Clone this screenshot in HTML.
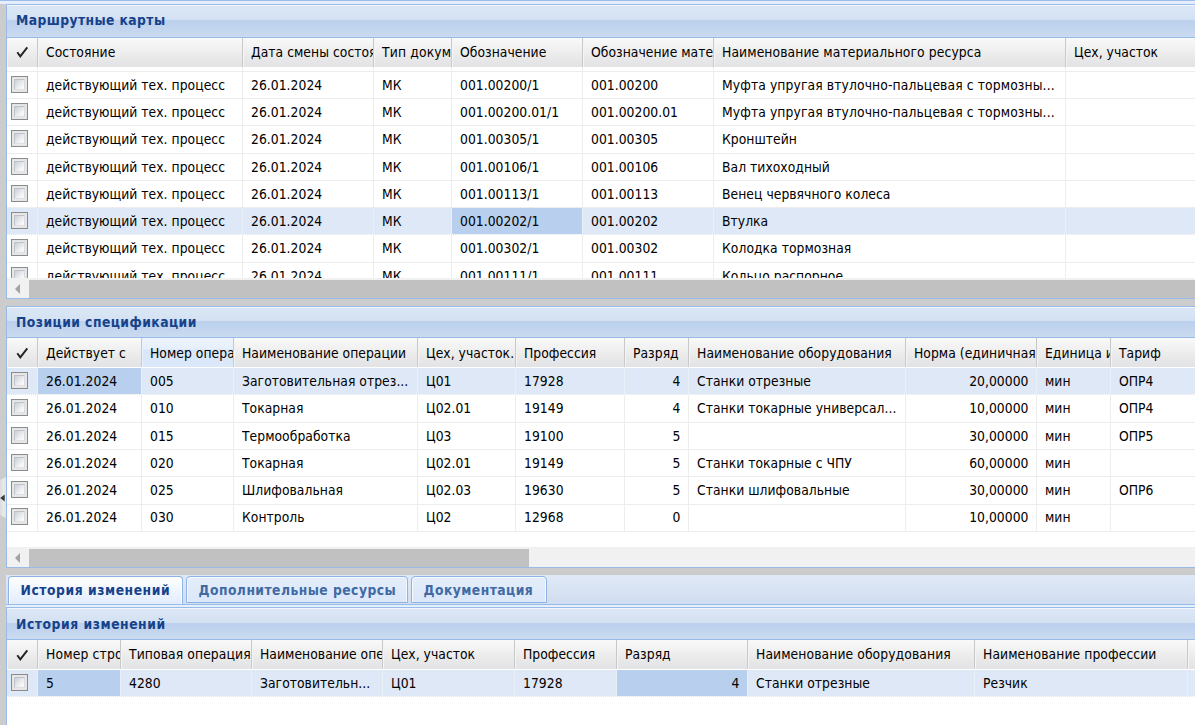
<!DOCTYPE html><html lang="ru"><head><meta charset="utf-8"><title>Маршрутные карты</title><style>
html,body{margin:0;padding:0}
body{width:1195px;height:725px;overflow:hidden;position:relative;background:#ccc;font:13.75px/17px "DejaVu Sans Condensed","Liberation Sans",sans-serif;color:#000;letter-spacing:0.04px}
div,span,i{box-sizing:border-box}
.abs{position:absolute}
.topstrip{left:0;top:0;width:1195px;height:4px;background:#e4eefd;border-top:1px solid #9cbde9}
.panel{position:absolute;left:6px;width:1200px;border:1px solid #99bbe8;background:#fff;overflow:hidden}
.phd{position:absolute;left:0;top:0;width:100%;height:33px;border-bottom:1px solid #99bbe8;
 background:linear-gradient(#f3f7fc 0,#f3f7fc 1px,#dbe7f6 1px,#d4e1f2 15px,#bbd0ed 15px,#cadaf0 100%);}
.phd span{position:absolute;left:9px;top:7px;font-weight:bold;color:#15428b;white-space:nowrap;line-height:17px}
.ghd{position:absolute;left:0;width:100%;height:29px;background:linear-gradient(#f9f9f9 0,#f1f1f1 35%,#e8e8e9 72%,#e2e3e5 100%);border-bottom:0}
.hc{position:absolute;top:0;height:29px;border-left:1px solid #f4f4f4;border-right:1px solid #c9c9c9;overflow:hidden;white-space:nowrap;line-height:17px;padding:6px 0 0 7px}
.hc.over{background:linear-gradient(#edf4fd 0,#e5eefb 11px,#d8e6f9 12px,#dbe8fa 100%);border-left-color:#e9f1fc;border-right-color:#c3c9d2}
.hc.r{text-align:left}
.row{position:absolute;left:0;width:100%;border-bottom:1px solid #ededed;background:#fff}
.row.sel{background:#dfe8f6;border-bottom:1px dotted #fbfcfe}
.c{position:absolute;top:0;height:100%;overflow:hidden;white-space:nowrap;padding-left:8px;border-right:1px solid #ededed}
.row.sel .c{border-right-color:#e9eef7}
.c.num{text-align:right;padding-right:8px;padding-left:0}
.c.cs{background:#b8cfee}
.c span{position:absolute;left:8px;right:8px;overflow:hidden;text-overflow:ellipsis}
.c.num span{left:0;right:7.5px}
.cb{position:absolute;left:4px;width:17px;height:17px;border:1px solid #8a8d8d;background:#e9e9ea;padding:2px;box-shadow:inset 0 0 0 1px #e4e4e5}
.cb i{display:block;width:11px;height:11px;border:1px solid;border-color:#bcc0c8 #d9dbdf #dfe0e3 #bfc3ca;background:linear-gradient(135deg,#cbd0d8 0,#e4e6ea 45%,#f6f6f7 75%,#f8f8f8 100%)}
.sb{position:absolute;left:0;width:100%;height:20px;background:#f1f1f1}
.sb .thumb{position:absolute;top:2px;height:18px;background:#c1c1c1;left:22px}
.sb .arr{position:absolute;left:8px;top:6px;width:0;height:0;border-top:5px solid transparent;border-bottom:5px solid transparent;border-right:5.5px solid #a3a3a3}
.chk{position:absolute;left:-1px;top:0}
</style></head><body>
<div class="abs topstrip"></div>
<div class="abs" style="left:0;top:477px;width:6px;height:41px;background:linear-gradient(90deg,#dcdcdc,#e9e9e9 60%,#e4e4e4);clip-path:polygon(0 3px,100% 0,100% 100%,0 38px)"></div>
<svg class="abs" style="left:0;top:493px" width="6" height="10" viewBox="0 0 6 10"><path d="M0.2 5 L4.7 1.6 L4.7 8.4 Z" fill="#383838"/></svg>
<div class="panel" style="top:4px;height:295px">
<div class="phd"><span style="letter-spacing:0.4px">Маршрутные карты</span></div>
<div class="ghd" style="top:33px">
<div class="hc" style="left:0;width:31px;padding:0"><svg class="chk" style="top:0px" width="30" height="28" viewBox="0 0 30 28"><path d="M10.3 14.3 L13.3 18.4 L20.3 9.3" fill="none" stroke="#222" stroke-width="1.9"/></svg></div>
<div class="hc" style="left:31px;width:205px;padding-top:6px">Состояние</div>
<div class="hc" style="left:236px;width:131px;padding-top:6px">Дата смены состояния</div>
<div class="hc" style="left:367px;width:78px;padding-top:6px;letter-spacing:0.15px">Тип документа</div>
<div class="hc" style="left:445px;width:131px;padding-top:6px">Обозначение</div>
<div class="hc" style="left:576px;width:131px;padding-top:6px">Обозначение материального ресурса</div>
<div class="hc" style="left:707px;width:352px;padding-top:6px;letter-spacing:0.1px">Наименование материального ресурса</div>
<div class="hc" style="left:1059px;width:234px;padding-top:6px">Цех, участок</div>
</div>
<div class="abs" style="left:0;top:62px;width:100%;height:211px;overflow:hidden">
<div class="row" style="top:-22px;height:27px">
<div class="c" style="left:0;width:31px;padding:0"><div class="cb" style="top:4px"><i></i></div></div>
<div class="c" style="left:31px;width:205px"><span style="top:5px"></span></div>
<div class="c" style="left:236px;width:131px"><span style="top:5px"></span></div>
<div class="c" style="left:367px;width:78px"><span style="top:5px"></span></div>
<div class="c" style="left:445px;width:131px"><span style="top:5px"></span></div>
<div class="c" style="left:576px;width:131px"><span style="top:5px"></span></div>
<div class="c" style="left:707px;width:352px"><span style="top:5px"></span></div>
<div class="c" style="left:1059px;width:234px"><span style="top:5px"></span></div>
</div>
<div class="row" style="top:5px;height:27px">
<div class="c" style="left:0;width:31px;padding:0"><div class="cb" style="top:4px"><i></i></div></div>
<div class="c" style="left:31px;width:205px"><span style="top:5px">действующий тех. процесс</span></div>
<div class="c" style="left:236px;width:131px"><span style="top:5px">26.01.2024</span></div>
<div class="c" style="left:367px;width:78px"><span style="top:5px">МК</span></div>
<div class="c" style="left:445px;width:131px"><span style="top:5px">001.00200/1</span></div>
<div class="c" style="left:576px;width:131px"><span style="top:5px">001.00200</span></div>
<div class="c" style="left:707px;width:352px"><span style="top:5px;letter-spacing:0.11px">Муфта упругая втулочно-пальцевая с тормозны...</span></div>
<div class="c" style="left:1059px;width:234px"><span style="top:5px"></span></div>
</div>
<div class="row" style="top:32px;height:27px">
<div class="c" style="left:0;width:31px;padding:0"><div class="cb" style="top:4px"><i></i></div></div>
<div class="c" style="left:31px;width:205px"><span style="top:5px">действующий тех. процесс</span></div>
<div class="c" style="left:236px;width:131px"><span style="top:5px">26.01.2024</span></div>
<div class="c" style="left:367px;width:78px"><span style="top:5px">МК</span></div>
<div class="c" style="left:445px;width:131px"><span style="top:5px">001.00200.01/1</span></div>
<div class="c" style="left:576px;width:131px"><span style="top:5px">001.00200.01</span></div>
<div class="c" style="left:707px;width:352px"><span style="top:5px;letter-spacing:0.11px">Муфта упругая втулочно-пальцевая с тормозны...</span></div>
<div class="c" style="left:1059px;width:234px"><span style="top:5px"></span></div>
</div>
<div class="row" style="top:59px;height:28px">
<div class="c" style="left:0;width:31px;padding:0"><div class="cb" style="top:4px"><i></i></div></div>
<div class="c" style="left:31px;width:205px"><span style="top:5px">действующий тех. процесс</span></div>
<div class="c" style="left:236px;width:131px"><span style="top:5px">26.01.2024</span></div>
<div class="c" style="left:367px;width:78px"><span style="top:5px">МК</span></div>
<div class="c" style="left:445px;width:131px"><span style="top:5px">001.00305/1</span></div>
<div class="c" style="left:576px;width:131px"><span style="top:5px">001.00305</span></div>
<div class="c" style="left:707px;width:352px"><span style="top:5px">Кронштейн</span></div>
<div class="c" style="left:1059px;width:234px"><span style="top:5px"></span></div>
</div>
<div class="row" style="top:87px;height:27px">
<div class="c" style="left:0;width:31px;padding:0"><div class="cb" style="top:4px"><i></i></div></div>
<div class="c" style="left:31px;width:205px"><span style="top:5px">действующий тех. процесс</span></div>
<div class="c" style="left:236px;width:131px"><span style="top:5px">26.01.2024</span></div>
<div class="c" style="left:367px;width:78px"><span style="top:5px">МК</span></div>
<div class="c" style="left:445px;width:131px"><span style="top:5px">001.00106/1</span></div>
<div class="c" style="left:576px;width:131px"><span style="top:5px">001.00106</span></div>
<div class="c" style="left:707px;width:352px"><span style="top:5px">Вал тихоходный</span></div>
<div class="c" style="left:1059px;width:234px"><span style="top:5px"></span></div>
</div>
<div class="row" style="top:114px;height:27px">
<div class="c" style="left:0;width:31px;padding:0"><div class="cb" style="top:4px"><i></i></div></div>
<div class="c" style="left:31px;width:205px"><span style="top:5px">действующий тех. процесс</span></div>
<div class="c" style="left:236px;width:131px"><span style="top:5px">26.01.2024</span></div>
<div class="c" style="left:367px;width:78px"><span style="top:5px">МК</span></div>
<div class="c" style="left:445px;width:131px"><span style="top:5px">001.00113/1</span></div>
<div class="c" style="left:576px;width:131px"><span style="top:5px">001.00113</span></div>
<div class="c" style="left:707px;width:352px"><span style="top:5px">Венец червячного колеса</span></div>
<div class="c" style="left:1059px;width:234px"><span style="top:5px"></span></div>
</div>
<div class="row sel" style="top:141px;height:27px">
<div class="c" style="left:0;width:31px;padding:0"><div class="cb" style="top:4px"><i></i></div></div>
<div class="c" style="left:31px;width:205px"><span style="top:5px">действующий тех. процесс</span></div>
<div class="c" style="left:236px;width:131px"><span style="top:5px">26.01.2024</span></div>
<div class="c" style="left:367px;width:78px"><span style="top:5px">МК</span></div>
<div class="c cs" style="left:445px;width:131px"><span style="top:5px">001.00202/1</span></div>
<div class="c" style="left:576px;width:131px"><span style="top:5px">001.00202</span></div>
<div class="c" style="left:707px;width:352px"><span style="top:5px">Втулка</span></div>
<div class="c" style="left:1059px;width:234px"><span style="top:5px"></span></div>
</div>
<div class="row" style="top:168px;height:28px">
<div class="c" style="left:0;width:31px;padding:0"><div class="cb" style="top:4px"><i></i></div></div>
<div class="c" style="left:31px;width:205px"><span style="top:5px">действующий тех. процесс</span></div>
<div class="c" style="left:236px;width:131px"><span style="top:5px">26.01.2024</span></div>
<div class="c" style="left:367px;width:78px"><span style="top:5px">МК</span></div>
<div class="c" style="left:445px;width:131px"><span style="top:5px">001.00302/1</span></div>
<div class="c" style="left:576px;width:131px"><span style="top:5px">001.00302</span></div>
<div class="c" style="left:707px;width:352px"><span style="top:5px">Колодка тормозная</span></div>
<div class="c" style="left:1059px;width:234px"><span style="top:5px"></span></div>
</div>
<div class="row" style="top:196px;height:27px">
<div class="c" style="left:0;width:31px;padding:0"><div class="cb" style="top:4px"><i></i></div></div>
<div class="c" style="left:31px;width:205px"><span style="top:5px">действующий тех. процесс</span></div>
<div class="c" style="left:236px;width:131px"><span style="top:5px">26.01.2024</span></div>
<div class="c" style="left:367px;width:78px"><span style="top:5px">МК</span></div>
<div class="c" style="left:445px;width:131px"><span style="top:5px">001.00111/1</span></div>
<div class="c" style="left:576px;width:131px"><span style="top:5px">001.00111</span></div>
<div class="c" style="left:707px;width:352px"><span style="top:5px">Кольцо распорное</span></div>
<div class="c" style="left:1059px;width:234px"><span style="top:5px"></span></div>
</div>
</div>
<div class="sb" style="top:273px"><div class="thumb" style="width:1300px"></div><div class="arr"></div></div>
</div>
<div class="panel" style="top:306px;height:262px">
<div class="phd" style="height:31px;background:linear-gradient(#f3f7fc 0,#f3f7fc 1px,#dbe7f6 1px,#d4e1f2 14px,#bbd0ed 14px,#cadaf0 100%)"><span style="letter-spacing:0.45px">Позиции спецификации</span></div>
<div class="ghd" style="top:31px">
<div class="hc" style="left:0;width:31px;padding:0"><svg class="chk" style="top:1px" width="30" height="28" viewBox="0 0 30 28"><path d="M10.3 14.3 L13.3 18.4 L20.3 9.3" fill="none" stroke="#222" stroke-width="1.9"/></svg></div>
<div class="hc" style="left:31px;width:104px;padding-top:7px">Действует с</div>
<div class="hc over" style="left:135px;width:92px;padding-top:7px">Номер операции</div>
<div class="hc" style="left:227px;width:184px;padding-top:7px">Наименование операции</div>
<div class="hc" style="left:411px;width:98px;padding-top:7px">Цех, участок.</div>
<div class="hc" style="left:509px;width:109px;padding-top:7px">Профессия</div>
<div class="hc" style="left:618px;width:64px;padding-top:7px">Разряд</div>
<div class="hc" style="left:682px;width:217px;padding-top:7px;letter-spacing:0.09px">Наименование оборудования</div>
<div class="hc" style="left:899px;width:131px;padding-top:7px">Норма (единичная)</div>
<div class="hc" style="left:1030px;width:74px;padding-top:7px">Единица измерения</div>
<div class="hc" style="left:1104px;width:189px;padding-top:7px">Тариф</div>
</div>
<div class="abs" style="left:0;top:60px;width:100%;height:180px;overflow:hidden">
<div class="row sel" style="top:1px;height:27px">
<div class="c" style="left:0;width:31px;padding:0"><div class="cb" style="top:4px"><i></i></div></div>
<div class="c cs" style="left:31px;width:104px"><span style="top:5px">26.01.2024</span></div>
<div class="c" style="left:135px;width:92px"><span style="top:5px">005</span></div>
<div class="c" style="left:227px;width:184px"><span style="top:5px">Заготовительная отрез...</span></div>
<div class="c" style="left:411px;width:98px"><span style="top:5px">Ц01</span></div>
<div class="c" style="left:509px;width:109px"><span style="top:5px">17928</span></div>
<div class="c num" style="left:618px;width:64px"><span style="top:5px">4</span></div>
<div class="c" style="left:682px;width:217px"><span style="top:5px">Станки отрезные</span></div>
<div class="c num" style="left:899px;width:131px"><span style="top:5px">20,00000</span></div>
<div class="c" style="left:1030px;width:74px"><span style="top:5px">мин</span></div>
<div class="c" style="left:1104px;width:189px"><span style="top:5px">ОПР4</span></div>
</div>
<div class="row" style="top:28px;height:28px">
<div class="c" style="left:0;width:31px;padding:0"><div class="cb" style="top:4px"><i></i></div></div>
<div class="c" style="left:31px;width:104px"><span style="top:5px">26.01.2024</span></div>
<div class="c" style="left:135px;width:92px"><span style="top:5px">010</span></div>
<div class="c" style="left:227px;width:184px"><span style="top:5px">Токарная</span></div>
<div class="c" style="left:411px;width:98px"><span style="top:5px">Ц02.01</span></div>
<div class="c" style="left:509px;width:109px"><span style="top:5px">19149</span></div>
<div class="c num" style="left:618px;width:64px"><span style="top:5px">4</span></div>
<div class="c" style="left:682px;width:217px"><span style="top:5px">Станки токарные универсал...</span></div>
<div class="c num" style="left:899px;width:131px"><span style="top:5px">10,00000</span></div>
<div class="c" style="left:1030px;width:74px"><span style="top:5px">мин</span></div>
<div class="c" style="left:1104px;width:189px"><span style="top:5px">ОПР4</span></div>
</div>
<div class="row" style="top:56px;height:27px">
<div class="c" style="left:0;width:31px;padding:0"><div class="cb" style="top:4px"><i></i></div></div>
<div class="c" style="left:31px;width:104px"><span style="top:5px">26.01.2024</span></div>
<div class="c" style="left:135px;width:92px"><span style="top:5px">015</span></div>
<div class="c" style="left:227px;width:184px"><span style="top:5px">Термообработка</span></div>
<div class="c" style="left:411px;width:98px"><span style="top:5px">Ц03</span></div>
<div class="c" style="left:509px;width:109px"><span style="top:5px">19100</span></div>
<div class="c num" style="left:618px;width:64px"><span style="top:5px">5</span></div>
<div class="c" style="left:682px;width:217px"><span style="top:5px"></span></div>
<div class="c num" style="left:899px;width:131px"><span style="top:5px">30,00000</span></div>
<div class="c" style="left:1030px;width:74px"><span style="top:5px">мин</span></div>
<div class="c" style="left:1104px;width:189px"><span style="top:5px">ОПР5</span></div>
</div>
<div class="row" style="top:83px;height:27px">
<div class="c" style="left:0;width:31px;padding:0"><div class="cb" style="top:4px"><i></i></div></div>
<div class="c" style="left:31px;width:104px"><span style="top:5px">26.01.2024</span></div>
<div class="c" style="left:135px;width:92px"><span style="top:5px">020</span></div>
<div class="c" style="left:227px;width:184px"><span style="top:5px">Токарная</span></div>
<div class="c" style="left:411px;width:98px"><span style="top:5px">Ц02.01</span></div>
<div class="c" style="left:509px;width:109px"><span style="top:5px">19149</span></div>
<div class="c num" style="left:618px;width:64px"><span style="top:5px">5</span></div>
<div class="c" style="left:682px;width:217px"><span style="top:5px">Станки токарные с ЧПУ</span></div>
<div class="c num" style="left:899px;width:131px"><span style="top:5px">60,00000</span></div>
<div class="c" style="left:1030px;width:74px"><span style="top:5px">мин</span></div>
<div class="c" style="left:1104px;width:189px"><span style="top:5px"></span></div>
</div>
<div class="row" style="top:110px;height:28px">
<div class="c" style="left:0;width:31px;padding:0"><div class="cb" style="top:4px"><i></i></div></div>
<div class="c" style="left:31px;width:104px"><span style="top:5px">26.01.2024</span></div>
<div class="c" style="left:135px;width:92px"><span style="top:5px">025</span></div>
<div class="c" style="left:227px;width:184px"><span style="top:5px">Шлифовальная</span></div>
<div class="c" style="left:411px;width:98px"><span style="top:5px">Ц02.03</span></div>
<div class="c" style="left:509px;width:109px"><span style="top:5px">19630</span></div>
<div class="c num" style="left:618px;width:64px"><span style="top:5px">5</span></div>
<div class="c" style="left:682px;width:217px"><span style="top:5px">Станки шлифовальные</span></div>
<div class="c num" style="left:899px;width:131px"><span style="top:5px">30,00000</span></div>
<div class="c" style="left:1030px;width:74px"><span style="top:5px">мин</span></div>
<div class="c" style="left:1104px;width:189px"><span style="top:5px">ОПР6</span></div>
</div>
<div class="row" style="top:138px;height:27px">
<div class="c" style="left:0;width:31px;padding:0"><div class="cb" style="top:3px"><i></i></div></div>
<div class="c" style="left:31px;width:104px"><span style="top:4px">26.01.2024</span></div>
<div class="c" style="left:135px;width:92px"><span style="top:4px">030</span></div>
<div class="c" style="left:227px;width:184px"><span style="top:4px">Контроль</span></div>
<div class="c" style="left:411px;width:98px"><span style="top:4px">Ц02</span></div>
<div class="c" style="left:509px;width:109px"><span style="top:4px">12968</span></div>
<div class="c num" style="left:618px;width:64px"><span style="top:4px">0</span></div>
<div class="c" style="left:682px;width:217px"><span style="top:4px"></span></div>
<div class="c num" style="left:899px;width:131px"><span style="top:4px">10,00000</span></div>
<div class="c" style="left:1030px;width:74px"><span style="top:4px">мин</span></div>
<div class="c" style="left:1104px;width:189px"><span style="top:4px"></span></div>
</div>
</div>
<div class="sb" style="top:240px"><div class="thumb" style="width:500px"></div><div class="arr"></div></div>
</div>
<div class="abs" style="left:6px;top:575px;width:1200px;height:29px;background:linear-gradient(#dfe9f6,#d1ddf0)"></div>
<div class="abs" style="left:6px;top:604px;width:1200px;height:1px;background:#99bbe8"></div>
<div class="abs" style="left:6px;top:605px;width:1200px;height:2px;background:#e6effc"></div>
<div class="abs" style="left:8px;top:576px;width:175px;height:28px;border:1px solid #8db2e3;border-bottom:0;border-radius:4px 4px 0 0;background:linear-gradient(#fff 0,#f4f8fe 35%,#e1ecfc 100%);box-shadow:inset 1px 1px 0 #fff,inset -1px 0 0 #fff;color:#15428b;z-index:2;font-weight:bold;letter-spacing:0.55px;line-height:17px;padding:5px 0 0 11.5px;white-space:nowrap">История изменений</div>
<div class="abs" style="left:186px;top:576px;width:222px;height:27px;border:1px solid #8db2e3;border-radius:4px 4px 0 0;background:linear-gradient(#e4eefb 0,#dfeafa 50%,#dbe8fa 100%);box-shadow:inset 1px 1px 0 #f6faff,inset -1px 0 0 #f6faff;color:#416aa3;font-weight:bold;letter-spacing:0.45px;line-height:17px;padding:5px 0 0 11.5px;white-space:nowrap">Дополнительные ресурсы</div>
<div class="abs" style="left:411px;top:576px;width:136px;height:27px;border:1px solid #8db2e3;border-radius:4px 4px 0 0;background:linear-gradient(#e4eefb 0,#dfeafa 50%,#dbe8fa 100%);box-shadow:inset 1px 1px 0 #f6faff,inset -1px 0 0 #f6faff;color:#416aa3;font-weight:bold;letter-spacing:0.45px;line-height:17px;padding:5px 0 0 11.5px;white-space:nowrap">Документация</div>
<div class="panel" style="top:607px;height:200px">
<div class="phd" style="height:32px"><span style="letter-spacing:0.55px;top:8px">История изменений</span></div>
<div class="ghd" style="top:32px">
<div class="hc" style="left:0;width:31px;padding:0"><svg class="chk" style="top:1px" width="30" height="28" viewBox="0 0 30 28"><path d="M10.3 14.3 L13.3 18.4 L20.3 9.3" fill="none" stroke="#222" stroke-width="1.9"/></svg></div>
<div class="hc" style="left:31px;width:83px;padding-top:6px;letter-spacing:0.17px">Номер строки</div>
<div class="hc" style="left:114px;width:131px;padding-top:6px;letter-spacing:0.1px">Типовая операция</div>
<div class="hc" style="left:245px;width:131px;padding-top:6px">Наименование операции</div>
<div class="hc" style="left:376px;width:132px;padding-top:6px">Цех, участок</div>
<div class="hc" style="left:508px;width:102px;padding-top:6px">Профессия</div>
<div class="hc" style="left:610px;width:131px;padding-top:6px">Разряд</div>
<div class="hc" style="left:741px;width:227px;padding-top:6px;letter-spacing:0.09px">Наименование оборудования</div>
<div class="hc" style="left:968px;width:213px;padding-top:6px;letter-spacing:0.09px">Наименование профессии</div>
<div class="hc" style="left:1181px;width:112px;padding-top:6px"></div>
</div>
<div class="abs" style="left:0;top:61px;width:100%;height:100px;overflow:hidden">
<div class="row sel" style="top:1px;height:27px">
<div class="c" style="left:0;width:31px;padding:0"><div class="cb" style="top:4px"><i></i></div></div>
<div class="c cs" style="left:31px;width:83px"><span style="top:5px">5</span></div>
<div class="c" style="left:114px;width:131px"><span style="top:5px">4280</span></div>
<div class="c" style="left:245px;width:131px"><span style="top:5px">Заготовительн...</span></div>
<div class="c" style="left:376px;width:132px"><span style="top:5px">Ц01</span></div>
<div class="c" style="left:508px;width:102px"><span style="top:5px">17928</span></div>
<div class="c num cs" style="left:610px;width:131px"><span style="top:5px">4</span></div>
<div class="c" style="left:741px;width:227px"><span style="top:5px">Станки отрезные</span></div>
<div class="c" style="left:968px;width:213px"><span style="top:5px">Резчик</span></div>
<div class="c" style="left:1181px;width:112px"><span style="top:5px"></span></div>
</div>
</div>
</div>
</body></html>
